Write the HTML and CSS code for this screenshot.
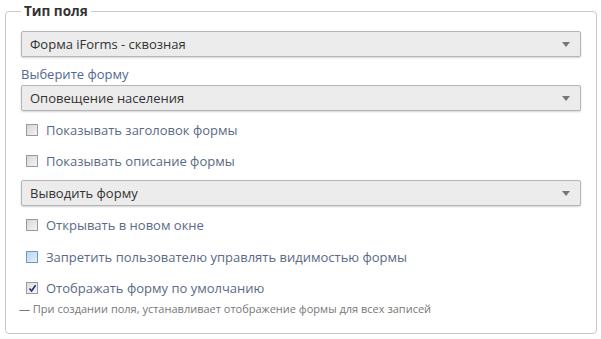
FILE: index.html
```html
<!DOCTYPE html>
<html lang="ru">
<head>
    <meta charset="UTF-8">
    <title>Тип поля</title>
    <link rel="stylesheet" href="styles.css">
</head>
<body>
    <fieldset class="field-type">
        <legend>Тип поля</legend>

        <div class="select first">
            <span>Форма iForms - сквозная</span>
            <i class="arrow"></i>
        </div>

        <div class="label">Выберите форму</div>
        <div class="select">
            <span>Оповещение населения</span>
            <i class="arrow"></i>
        </div>

        <label class="check"><span class="box"></span>Показывать заголовок формы</label>
        <label class="check"><span class="box"></span>Показывать описание формы</label>

        <div class="select after-check">
            <span>Выводить форму</span>
            <i class="arrow"></i>
        </div>

        <label class="check"><span class="box"></span>Открывать в новом окне</label>
        <label class="check wide"><span class="box hover"></span>Запретить пользователю управлять видимостью формы</label>
        <label class="check"><span class="box checked">
            <svg viewBox="0 0 9 9" width="9" height="9"><path d="M1.5 4.5 L3.6 7 L7.6 1.2" fill="none" stroke="#1f2f7a" stroke-width="1.6"/></svg>
        </span>Отображать форму по умолчанию</label>
        <div class="note">— При создании поля, устанавливает отображение формы для всех записей</div>
    </fieldset>
</body>
</html>
```

FILE: styles.css
```css
body {
    margin: 0;
    font-family: "Open Sans", Arial, sans-serif;
    font-size: 13px;
    color: #333;
    background: #fff;
}
.field-type {
    margin: 3px 4px 0 5px;
    padding: 0 15px 0 15px;
    height: 331px;
    box-sizing: border-box;
    border: 1px solid #c8c8c8;
    border-radius: 4px;
    display: flex;
    flex-direction: column;
}
.field-type legend {
    font-weight: bold;
    font-size: 13.5px;
    color: #333;
    padding: 0 3px;
    margin-left: 0;
    line-height: 16px;
}
.select {
    height: 24px;
    flex-shrink: 0;
    border: 1px solid #b5b5b5;
    border-radius: 2px;
    background: #ececec;
    box-shadow: 0 1px 2px rgba(0, 0, 0, 0.18);
    display: flex;
    align-items: center;
    justify-content: space-between;
    padding: 0 10px 0 8px;
    color: #333;
}
.select.first {
    margin-top: 12px;
}
.select.after-check {
    margin-top: 10px;
}
.arrow {
    width: 0;
    height: 0;
    border-left: 4px solid transparent;
    border-right: 4px solid transparent;
    border-top: 5px solid #777;
}
.label {
    color: #52698e;
    margin-top: 8px;
    line-height: 18px;
    height: 20px;
}
.check {
    display: flex;
    align-items: center;
    color: #5a6a84;
    margin-top: 13px;
    height: 18px;
    padding-left: 5px;
}
.check.wide {
    margin-top: 14px;
}
.select + .check {
    margin-top: 10px;
}
.box {
    width: 10px;
    height: 10px;
    border: 1px solid #9a9a9a;
    background: linear-gradient(135deg, #d6d6d6, #f4f4f4);
    margin-right: 8px;
    display: flex;
    align-items: center;
    justify-content: center;
}
.box.hover {
    border-color: #6d98c0;
    background: linear-gradient(135deg, #b9d6ee, #e4f0fa);
}
.box.checked {
    background: linear-gradient(135deg, #dcdcdc, #f6f6f6);
}
.note {
    font-size: 11px;
    color: #777;
    margin-top: 4px;
    margin-left: -2px;
    line-height: 16px;
}
```
